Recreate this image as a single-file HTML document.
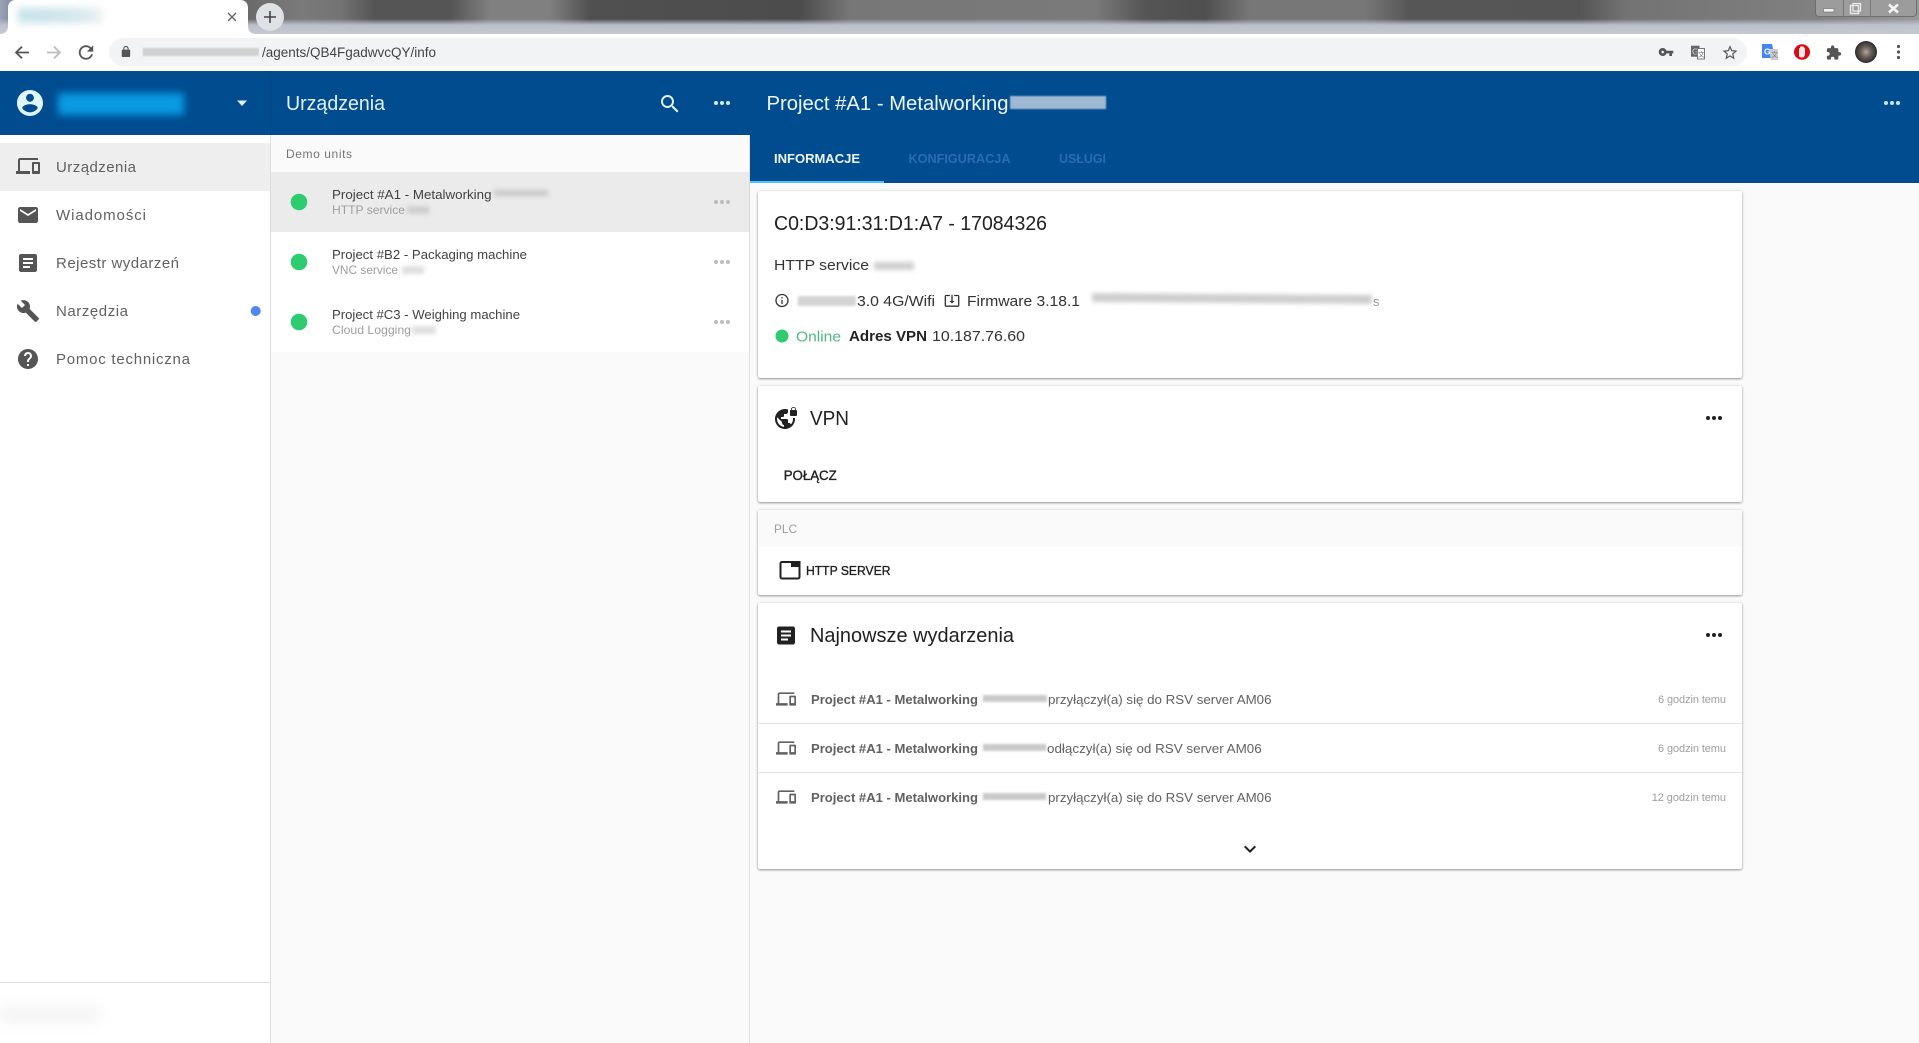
<!DOCTYPE html>
<html lang="pl"><head><meta charset="utf-8"><title>Urządzenia</title>
<style>
html,body{margin:0;padding:0;width:1919px;height:1043px;overflow:hidden;background:#fafafa;font-family:"Liberation Sans",sans-serif}
.b{position:absolute;box-sizing:border-box}
.card{position:absolute;left:758px;width:984px;background:#fff;border-radius:2px;box-shadow:0 1px 2px rgba(0,0,0,.38),0 0 3px rgba(0,0,0,.1)}
.blur{position:absolute;filter:blur(2px)}
.st{background:repeating-linear-gradient(90deg,#bdbdbd 0 1px,#d8d8d8 1px 2px)}
svg.o{position:absolute;left:0;top:0}
text{font-family:"Liberation Sans",sans-serif}
.m{stroke-width:.35px}
</style></head><body>
<!-- window strip -->
<div class="b" style="left:0;top:0;width:1919px;height:34px;background:linear-gradient(90deg,#9aa3b5 0,#8a93a6 8px,#6a6a6a 250px,#7a7a7a 300px,#747474 340px,#555 375px,#555 450px,#808080 490px,#808080 550px,#505050 590px,#4c4c4c 800px,#777 850px,#7a7a7a 1095px,#555 1145px,#4f4f4f 1205px,#777 1250px,#777 1365px,#565656 1410px,#555 1580px,#737373 1625px,#808080 1815px,#999 1919px)"></div>
<div class="b" style="left:0;top:19px;width:1919px;height:15px;background:linear-gradient(180deg,rgba(190,196,208,0) 0,rgba(190,196,208,.95) 6px,#c3c8d2 15px)"></div>
<div class="b" style="left:1815px;top:-2px;width:102px;height:19px;background:#9c9c9c;border:1px solid #6f6f6f;border-radius:0 0 4px 4px"></div>
<div class="b" style="left:1843px;top:0;width:1px;height:17px;background:#777"></div>
<div class="b" style="left:1870px;top:0;width:1px;height:17px;background:#777"></div>
<!-- toolbar -->
<div class="b" style="left:0;top:34px;width:1919px;height:37px;background:#fff"></div>
<div class="b" style="left:109px;top:38px;width:1638px;height:28px;background:#f1f3f4;border-radius:14px"></div>
<!-- header -->
<div class="b" style="left:0;top:71px;width:1919px;height:64px;background:#004c8f"></div>
<div class="b" style="left:750px;top:135px;width:1169px;height:48px;background:#004c8f"></div>
<div class="b" style="left:270px;top:71px;width:1px;height:64px;background:#04467f"></div>
<div class="b" style="left:749px;top:180.5px;width:135px;height:2.5px;background:#4fc3f7"></div>
<!-- sidebar -->
<div class="b" style="left:0;top:135px;width:271px;height:908px;background:#fff;border-right:1px solid #ddd"></div>
<div class="b" style="left:0;top:143px;width:270px;height:48px;background:#eee"></div>
<div class="b" style="left:0;top:982px;width:270px;height:1px;background:#ddd"></div>
<!-- list -->
<div class="b" style="left:271px;top:135px;width:479px;height:908px;background:#fafafa;border-right:1px solid #ddd"></div>
<div class="b" style="left:271px;top:172px;width:478px;height:60px;background:#ebebeb"></div>
<div class="b" style="left:271px;top:232px;width:478px;height:120px;background:#fff"></div>
<!-- cards -->
<div class="card" style="top:191px;height:187px"></div>
<div class="card" style="top:386px;height:116px"></div>
<div class="card" style="top:510px;height:85px"></div>
<div class="b" style="left:758px;top:510px;width:984px;height:37px;background:#fafafa"></div>
<div class="card" style="top:603px;height:266px"></div>
<div class="b" style="left:758px;top:723px;width:984px;height:1px;background:#e3e3e3"></div>
<div class="b" style="left:758px;top:772px;width:984px;height:1px;background:#e3e3e3"></div>
<!-- blurred regions -->
<div class="blur st" style="left:143px;top:48px;width:116px;height:8px;filter:blur(.8px);opacity:.85"></div>
<div class="blur" style="left:58px;top:93px;width:126px;height:22px;background:#0a9be3;filter:blur(4px)"></div>
<div class="blur" style="left:494px;top:190px;width:54px;height:6px;background:#c8c8c8;filter:blur(2.5px)"></div>
<div class="blur" style="left:407px;top:206px;width:22px;height:8px;background:#cfcfcf;filter:blur(2px)"></div>
<div class="blur" style="left:402px;top:266px;width:22px;height:8px;background:#dedede;filter:blur(2px)"></div>
<div class="blur" style="left:412px;top:326px;width:24px;height:8px;background:#dedede;filter:blur(2px)"></div>
<div class="blur" style="left:1010px;top:96px;width:96px;height:13px;background:repeating-linear-gradient(90deg,#8fabc9 0 1px,#b0c5dc 1px 2px);filter:blur(.9px)"></div>
<div class="blur" style="left:874px;top:262px;width:40px;height:8px;background:#d0d0d0;filter:blur(2px)"></div>
<div class="blur st" style="left:798px;top:296px;width:58px;height:10px;filter:blur(1px);opacity:.8"></div>
<div class="blur" style="left:1092px;top:294px;width:280px;height:9px;background:#cecece;filter:blur(2px);transform:skewY(.4deg)"></div>
<div class="blur st" style="left:983px;top:695px;width:64px;height:7px;filter:blur(1px)"></div>
<div class="blur st" style="left:983px;top:744px;width:63px;height:7px;filter:blur(1px)"></div>
<div class="blur st" style="left:983px;top:793px;width:63px;height:7px;filter:blur(1px)"></div>
<div class="blur" style="left:0;top:1006px;width:100px;height:16px;background:#f3f3f3;filter:blur(7px)"></div>

<svg class="o" width="1919" height="1043" viewBox="0 0 1919 1043">
<defs>
<path id="dev" d="M4 6h18V4H4c-1.100 0-2 .9-2 2v11H0v3h14v-3H4V6zm19 2h-6c-.55 0-1 .45-1 1v10c0 .55.45 1 1 1h6c.55 0 1-.45 1-1V9c0-.55-.45-1-1-1zm-1 9h-4v-7h4v7z"/>
<path id="art" d="M19 3H5c-1.100 0-2 .9-2 2v14c0 1.100.9 2 2 2h14c1.100 0 2-.9 2-2V5c0-1.100-.9-2-2-2zm-5 14H7v-2h7v2zm3-4H7v-2h10v2zm0-4H7V7h10v2z"/>
<g id="dots"><circle cx="-6" cy="0" r="2"/><circle cx="0" cy="0" r="2"/><circle cx="6" cy="0" r="2"/></g>
</defs>

<!-- tab -->
<path d="M0 34C5 34 8 31 8 26V8C8 3 11 0 16 0H240C245 0 248 3 248 8V26C248 31 251 34 256 34Z" fill="#fff"/>
<path d="M228 13L236 21M236 13L228 21" stroke="#666" stroke-width="1.300" fill="none"/>
<circle cx="270" cy="17" r="14" fill="#dee1e6"/>
<path d="M270 11V23M264 17H276" stroke="#444" stroke-width="1.600" fill="none"/>
<!-- window controls -->
<rect x="1823.500" y="8.500" width="10.500" height="3.500" fill="#f2f2f2" stroke="#666" stroke-width=".6"/>
<rect x="1850.500" y="5.500" width="8" height="8" fill="none" stroke="#e8e8e8" stroke-width="1.500"/>
<rect x="1853" y="3.500" width="7.500" height="7.500" fill="none" stroke="#eee" stroke-width="1.200"/>
<path d="M1889 4.500L1898 12.500M1898 4.500L1889 12.500" stroke="#f3f3f3" stroke-width="2.600" fill="none"/>

<!-- toolbar icons -->
<path d="M29 52.500H16.500M22 46.700L16 52.500L22 58.300" stroke="#555" stroke-width="1.800" fill="none"/>
<path d="M47 52.500H59.500M54 46.700L60 52.500L54 58.300" stroke="#bdbdbd" stroke-width="1.800" fill="none"/>
<path transform="translate(75.200,41.700) scale(.9)" fill="#555" d="M17.650 6.350C16.200 4.900 14.210 4 12 4c-4.420 0-7.990 3.580-7.990 8s3.570 8 7.990 8c3.730 0 6.840-2.550 7.730-6h-2.080c-.82 2.330-3.040 4-5.650 4-3.310 0-6-2.690-6-6s2.690-6 6-6c1.660 0 3.140.69 4.220 1.780L13 11h7V4l-2.350 2.350z"/>
<path transform="translate(119.600,45.400) scale(.53)" fill="#555" d="M18 8h-1V6c0-2.760-2.240-5-5-5S7 3.240 7 6v2H6c-1.100 0-2 .9-2 2v10c0 1.100.9 2 2 2h12c1.100 0 2-.9 2-2V10c0-1.100-.9-2-2-2zM9 6c0-1.660 1.340-3 3-3s3 1.340 3 3v2H9V6z"/>
<text x="262" y="57" font-size="13.500" fill="#444" textLength="174" lengthAdjust="spacingAndGlyphs">/agents/QB4FgadwvcQY/info</text>
<path transform="translate(1658.100,44.100) scale(.66)" fill="#555" d="M12.650 10C11.830 7.670 9.610 6 7 6c-3.310 0-6 2.690-6 6s2.690 6 6 6c2.610 0 4.830-1.670 5.650-4H17v4h4v-4h2v-4H12.650zM7 14c-1.100 0-2-.9-2-2s.9-2 2-2 2 .9 2 2-.9 2-2 2z"/>
<!-- translate -->
<rect x="1691" y="45.700" width="8.500" height="11" fill="#666"/>
<text x="1692" y="54.500" font-size="8.500" fill="#ddd">G</text>
<rect x="1697.500" y="48.500" width="7" height="10.500" fill="#fff" stroke="#777" stroke-width="1"/>
<text x="1698" y="56.500" font-size="6.500" fill="#666">文</text>
<path transform="translate(1721,43.700) scale(.75)" fill="#555" d="M22 9.240l-7.190-.62L12 2 9.190 8.630 2 9.240l5.460 4.730L5.820 21 12 17.270 18.180 21l-1.630-7.030L22 9.240zM12 15.400l-3.760 2.270 1-4.280-3.320-2.880 4.380-.38L12 6.100l1.710 4.040 4.380.38-3.320 2.880 1 4.280L12 15.400z"/>
<!-- g translate ext -->
<path d="M1762 44H1772L1775 58H1762Z" fill="#4285f4"/>
<path d="M1769 49H1778V60H1771Z" fill="#c9ced6"/>
<text x="1764" y="54.500" font-size="8.500" font-weight="bold" fill="#fff">G</text>
<text x="1771" y="57" font-size="7" fill="#777">文</text>
<!-- red ext -->
<ellipse cx="1802" cy="52" rx="8" ry="7.800" fill="#dc0a17"/>
<path d="M1799 56.500V49.500Q1799 48 1800 48V47Q1801 46 1802 46.500Q1803.500 46 1804 47.500Q1805.500 48 1805 50V53Q1805 57.500 1802 57.500Q1800 57.500 1799 56.500Z" fill="#fbeaea"/>
<path transform="translate(1825.500,44.700) scale(.68)" fill="#555" d="M20.500 11H19V7c0-1.100-.9-2-2-2h-4V3.500C13 2.120 11.880 1 10.500 1S8 2.120 8 3.500V5H4c-1.100 0-1.990.9-1.990 2v3.800H3.500c1.490 0 2.700 1.210 2.700 2.700s-1.210 2.700-2.700 2.700H2V20c0 1.100.9 2 2 2h3.800v-1.500c0-1.490 1.210-2.700 2.700-2.700 1.490 0 2.700 1.210 2.700 2.700V22H17c1.100 0 2-.9 2-2v-4h1.500c1.380 0 2.500-1.120 2.500-2.500S21.880 11 20.500 11z"/>
<defs><radialGradient id="av"><stop offset="0" stop-color="#b8a79b"/><stop offset=".45" stop-color="#6d625c"/><stop offset="1" stop-color="#2b2b2b"/></radialGradient></defs>
<circle cx="1866" cy="52" r="11" fill="url(#av)"/>
<g fill="#555"><circle cx="1898.500" cy="46.500" r="1.600"/><circle cx="1898.500" cy="52" r="1.600"/><circle cx="1898.500" cy="57.500" r="1.600"/></g>

<!-- header left -->
<path transform="translate(14.400,87.400) scale(1.300)" fill="#e1f5fe" d="M12 2C6.480 2 2 6.480 2 12s4.480 10 10 10 10-4.480 10-10S17.520 2 12 2zm0 3c1.660 0 3 1.340 3 3s-1.340 3-3 3-3-1.340-3-3 1.340-3 3-3zm0 14.200c-2.500 0-4.710-1.280-6-3.220.03-1.990 4-3.080 6-3.080 1.990 0 5.970 1.090 6 3.080-1.290 1.940-3.500 3.220-6 3.220z"/>
<path d="M237 100.500H247L242 106Z" fill="#e3f2fd"/>
<text x="286" y="110" font-size="20" fill="#e3f2fd" textLength="99" lengthAdjust="spacingAndGlyphs">Urządzenia</text>
<path transform="translate(658,92) scale(1)" fill="#e3f2fd" d="M15.500 14h-.79l-.28-.27C15.410 12.590 16 11.110 16 9.500 16 5.910 13.090 3 9.500 3S3 5.910 3 9.500 5.910 16 9.500 16c1.610 0 3.090-.59 4.230-1.570l.27.28v.79l5 4.990L20.490 19l-4.990-5zm-6 0C7.010 14 5 11.990 5 9.500S7.010 5 9.500 5 14 7.010 14 9.500 11.990 14 9.500 14z"/>
<use href="#dots" transform="translate(722,103)" fill="#d5ecfb"/>
<text x="766.500" y="110" font-size="20" fill="#eef6fc" textLength="242" lengthAdjust="spacingAndGlyphs">Project #A1 - Metalworking</text>
<use href="#dots" transform="translate(1892,103)" fill="#c4e6fa"/>
<text x="774" y="163" font-size="13" font-weight="bold" fill="#eef6fc" textLength="86" lengthAdjust="spacingAndGlyphs">INFORMACJE</text>
<text x="908.500" y="163" font-size="13" font-weight="bold" fill="#2a6cb4" textLength="102" lengthAdjust="spacingAndGlyphs">KONFIGURACJA</text>
<text x="1059" y="163" font-size="13" font-weight="bold" fill="#2a6cb4" textLength="47" lengthAdjust="spacingAndGlyphs">USŁUGI</text>

<!-- sidebar -->
<use href="#dev" transform="translate(16,154)" fill="#555"/>
<path transform="translate(16,203)" fill="#555" d="M20 4H4c-1.100 0-1.990.9-1.990 2L2 18c0 1.100.9 2 2 2h16c1.100 0 2-.9 2-2V6c0-1.100-.9-2-2-2zm0 4l-8 5-8-5V6l8 5 8-5v2z"/>
<use href="#art" transform="translate(16,251)" fill="#555"/>
<path transform="translate(16,299)" fill="#555" d="M22.700 19l-9.100-9.100c.9-2.300.4-5-1.500-6.900-2-2-5-2.400-7.400-1.300L9 6 6 9 1.600 4.700C.4 7.100.9 10.100 2.900 12.100c1.900 1.900 4.600 2.400 6.900 1.500l9.100 9.100c.4.4 1 .4 1.400 0l2.300-2.300c.5-.4.5-1.100.1-1.400z"/>
<path transform="translate(16,347)" fill="#555" d="M12 2C6.480 2 2 6.480 2 12s4.480 10 10 10 10-4.480 10-10S17.520 2 12 2zm1 17h-2v-2h2v2zm2.070-7.750l-.9.92C13.450 12.900 13 13.500 13 15h-2v-.5c0-1.100.45-2.100 1.170-2.830l1.240-1.260c.37-.36.59-.86.59-1.410 0-1.100-.9-2-2-2s-2 .9-2 2H8c0-2.210 1.790-4 4-4s4 1.790 4 4c0 .88-.36 1.680-.93 2.250z"/>
<g font-size="15" fill="#616161">
<text x="56" y="172" textLength="80" lengthAdjust="spacing">Urządzenia</text>
<text x="56" y="220" textLength="90" lengthAdjust="spacing">Wiadomości</text>
<text x="56" y="268" textLength="123" lengthAdjust="spacing">Rejestr wydarzeń</text>
<text x="56" y="316" textLength="72" lengthAdjust="spacing">Narzędzia</text>
<text x="56" y="364" textLength="134" lengthAdjust="spacing">Pomoc techniczna</text>
</g>
<circle cx="255.700" cy="311" r="5" fill="#4f86f0"/>

<!-- list -->
<text x="286" y="158" font-size="12" fill="#757575" textLength="66" lengthAdjust="spacing">Demo units</text>
<g fill="#2ecc71"><circle cx="299" cy="202" r="8.300"/><circle cx="299" cy="262" r="8.300"/><circle cx="299" cy="322" r="8.300"/></g>
<g font-size="13" fill="#424242">
<text x="332" y="199" textLength="159.500" lengthAdjust="spacingAndGlyphs">Project #A1 - Metalworking</text>
<text x="332" y="259" textLength="195" lengthAdjust="spacingAndGlyphs">Project #B2 - Packaging machine</text>
<text x="332" y="319" textLength="188" lengthAdjust="spacingAndGlyphs">Project #C3 - Weighing machine</text>
</g>
<g font-size="12" fill="#9e9e9e">
<text x="332" y="214" textLength="73" lengthAdjust="spacingAndGlyphs">HTTP service</text>
<text x="332" y="274" textLength="66" lengthAdjust="spacingAndGlyphs">VNC service</text>
<text x="332" y="334" textLength="79" lengthAdjust="spacingAndGlyphs">Cloud Logging</text>
</g>
<g fill="#bdbdbd"><use href="#dots" transform="translate(722,202)"/><use href="#dots" transform="translate(722,262)"/><use href="#dots" transform="translate(722,322)"/></g>

<!-- info card -->
<text x="774" y="230" font-size="20" fill="#212121" textLength="273" lengthAdjust="spacingAndGlyphs">C0:D3:91:31:D1:A7 - 17084326</text>
<g font-size="15" fill="#333">
<text x="774" y="270" textLength="95" lengthAdjust="spacingAndGlyphs">HTTP service</text>
<text x="857" y="306" textLength="78" lengthAdjust="spacingAndGlyphs">3.0 4G/Wifi</text>
<text x="967" y="306" textLength="113" lengthAdjust="spacingAndGlyphs">Firmware 3.18.1</text>
<text x="1373" y="306" fill="#999" font-size="13">s</text>
</g>
<path transform="translate(774,292.500) scale(.667)" fill="#333" d="M11 7h2v2h-2zm0 4h2v6h-2zm1-9C6.480 2 2 6.480 2 12s4.480 10 10 10 10-4.480 10-10S17.520 2 12 2zm0 18c-4.410 0-8-3.590-8-8s3.590-8 8-8 8 3.590 8 8-3.590 8-8 8z"/>
<path transform="translate(944,292.500) scale(.667)" fill="#333" d="M12 16.500l4-4h-3v-9h-2v9H8l4 4zm9-13h-6v1.990h6v14.030H3V5.490h6V3.500H3c-1.100 0-2 .9-2 2v14c0 1.100.9 2 2 2h18c1.100 0 2-.9 2-2v-14c0-1.100-.9-2-2-2z"/>
<circle cx="782" cy="336" r="6.500" fill="#2ecc71"/>
<text x="796" y="341.500" font-size="15" fill="#52b788" textLength="45" lengthAdjust="spacingAndGlyphs">Online</text>
<text x="849" y="341" font-size="15" font-weight="bold" fill="#212121" textLength="78" lengthAdjust="spacingAndGlyphs">Adres VPN</text>
<text x="932" y="341" font-size="15" fill="#333" textLength="93" lengthAdjust="spacingAndGlyphs">10.187.76.60</text>

<!-- vpn -->
<path transform="translate(774,406)" fill="#212121" d="M22 4v-.5C22 2.120 20.880 1 19.500 1S17 2.120 17 3.500V4c-.55 0-1 .45-1 1v4c0 .55.45 1 1 1h5c.55 0 1-.45 1-1V5c0-.55-.45-1-1-1zm-.8 0h-3.400v-.5c0-.94.76-1.700 1.700-1.700s1.700.76 1.700 1.700V4zm-2.280 8c.04.33.08.66.08 1 0 2.080-.8 3.970-2.100 5.390-.26-.81-1-1.390-1.900-1.390h-1v-3c0-.55-.45-1-1-1H7v-2h2c.55 0 1-.45 1-1V8h2c1.100 0 2-.9 2-2V3.460c-.95-.3-1.950-.46-3-.46C5.480 3 1 7.480 1 13s4.480 10 10 10 10-4.480 10-10c0-.34-.02-.67-.05-1h-2.030zM10 20.930c-3.950-.49-7-3.850-7-7.930 0-.62.08-1.210.21-1.790L8 16v1c0 1.100.9 2 2 2v1.930z"/>
<text x="810" y="425" font-size="20" fill="#212121" textLength="39" lengthAdjust="spacingAndGlyphs">VPN</text>
<use href="#dots" transform="translate(1714,418)" fill="#212121"/>
<text class="m" x="783.700" y="480" font-size="14" fill="#212121" stroke="#212121" textLength="53" lengthAdjust="spacingAndGlyphs">POŁĄCZ</text>

<!-- PLC -->
<text x="774" y="533" font-size="12" fill="#9e9e9e" textLength="23" lengthAdjust="spacingAndGlyphs">PLC</text>
<rect x="780.500" y="562" width="19" height="16.500" rx="1.500" fill="#fff" stroke="#212121" stroke-width="2"/>
<rect x="791" y="561" width="9.500" height="6" fill="#212121"/>
<text class="m" x="806" y="575" font-size="13" fill="#212121" stroke="#212121" textLength="84.500" lengthAdjust="spacingAndGlyphs">HTTP SERVER</text>

<!-- events -->
<use href="#art" transform="translate(774,623.500)" fill="#212121"/>
<text x="810" y="642" font-size="20" fill="#212121" textLength="204" lengthAdjust="spacingAndGlyphs">Najnowsze wydarzenia</text>
<use href="#dots" transform="translate(1714,635)" fill="#212121"/>
<g fill="#616161">
<use href="#dev" transform="translate(776,689) scale(.833)"/>
<use href="#dev" transform="translate(776,738) scale(.833)"/>
<use href="#dev" transform="translate(776,787) scale(.833)"/>
</g>
<g font-size="13" fill="#616161">
<g font-weight="bold">
<text x="811" y="704" textLength="167" lengthAdjust="spacingAndGlyphs">Project #A1 - Metalworking</text>
<text x="811" y="753" textLength="167" lengthAdjust="spacingAndGlyphs">Project #A1 - Metalworking</text>
<text x="811" y="802" textLength="167" lengthAdjust="spacingAndGlyphs">Project #A1 - Metalworking</text>
</g>
<text x="1048" y="704" textLength="223.500" lengthAdjust="spacingAndGlyphs">przyłączył(a) się do RSV server AM06</text>
<text x="1047" y="753" textLength="214.700" lengthAdjust="spacingAndGlyphs">odłączył(a) się od RSV server AM06</text>
<text x="1048" y="802" textLength="223.500" lengthAdjust="spacingAndGlyphs">przyłączył(a) się do RSV server AM06</text>
</g>
<g font-size="11" fill="#9e9e9e">
<text x="1658" y="703" textLength="68" lengthAdjust="spacing">6 godzin temu</text>
<text x="1658" y="752" textLength="68" lengthAdjust="spacing">6 godzin temu</text>
<text x="1651.700" y="801" textLength="74.300" lengthAdjust="spacing">12 godzin temu</text>
</g>
<path transform="translate(1238,837)" fill="#212121" d="M16.590 8.590L12 13.170 7.410 8.590 6 10l6 6 6-6z"/>
</svg>
<!-- tab title blur above the tab shape -->
<div class="blur" style="left:18px;top:8px;width:84px;height:15px;background:linear-gradient(90deg,#c3e2e9,#cfe6eb 60%,#e8eff1);filter:blur(4px)"></div>
</body></html>
